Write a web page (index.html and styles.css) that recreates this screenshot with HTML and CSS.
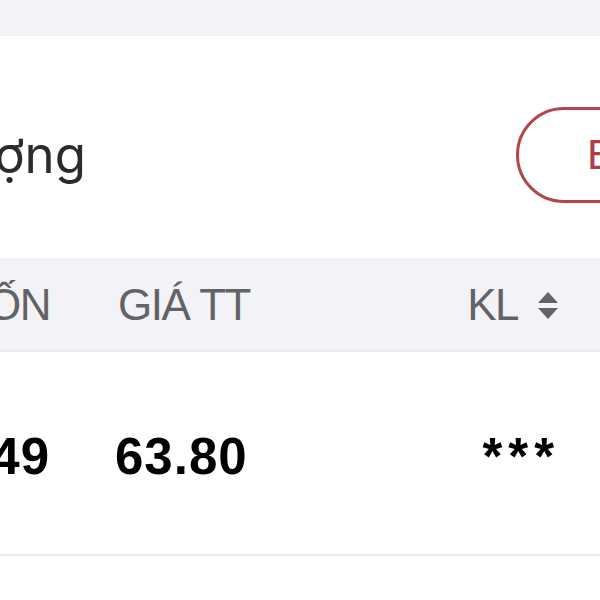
FILE: index.html
```html
<!DOCTYPE html>
<html lang="vi">
<head>
<meta charset="utf-8">
<link rel="stylesheet" href="styles.css">
</head>
<body>
<div class="page">
  <div class="topbar"></div>
  <div class="title-row">
    <div class="title"><span>Khối lượng</span></div>
    <div class="btn">Edit</div>
  </div>
  <div class="thead">
    <div class="c1"><span>GIÁ VỐN</span></div>
    <div class="c2">GIÁ TT</div>
    <div class="c3">KL
      <svg class="sort" width="20" height="27" viewBox="0 0 20 27"><path d="M10 0 L20 11 L0 11 Z" fill="#636366"/><path d="M0 16 L20 16 L10 27 Z" fill="#636366"/></svg>
    </div>
  </div>
  <div class="trow">
    <div class="c1"><span>12.49</span></div>
    <div class="c2">63.80</div>
    <div class="c3 stars">***</div>
  </div>
</div>
</body>
</html>
```
FILE: styles.css
```css
html, body { margin: 0; padding: 0; background: #fff; }
body { width: 600px; height: 600px; overflow: hidden; }
.page { width: 600px; overflow: hidden; }
.topbar { height: 35px; background: #f4f4f8; border-bottom: 1px solid #efeff2; }
.title-row {
  height: 222px; display: flex; align-items: center; justify-content: space-between;
  padding-top: 16px; box-sizing: border-box;
}
.title {
  width: 86px; display: flex; justify-content: flex-end; overflow: hidden;
  font-family: Inter, "Noto Sans", sans-serif; font-size: 51px; color: #2b2b2d;
  white-space: nowrap; line-height: 1.2;
}
.btn {
  flex-shrink: 0; width: 200px; height: 96px; box-sizing: border-box;
  border: 3px solid #b4464b; border-radius: 48px; margin-right: -116px;
  padding-left: 68px; display: flex; align-items: center;
  font-family: "Liberation Sans", Arial, sans-serif; font-size: 42px; color: #b03d45;
}
.thead {
  height: 94px; background: #f3f3f7; border-bottom: 2px solid #ececef;
  display: flex; align-items: center;
  font-family: "Liberation Sans", Arial, sans-serif; font-size: 44px; color: #636366;
  letter-spacing: -1.5px; padding-top: 2px; box-sizing: border-box;
}
.c1 { width: 50px; display: flex; justify-content: flex-end; overflow: hidden; white-space: nowrap; flex-shrink: 0; }
.c2 { margin-left: 68px; white-space: nowrap; }
.c3 { margin-left: auto; margin-right: 42px; display: flex; align-items: center; white-space: nowrap; }
.sort { margin-left: 20px; }
.trow {
  height: 204px; border-bottom: 2px solid #ececef; display: flex; align-items: flex-start;
  padding-top: 76px; box-sizing: border-box;
  font-family: "Liberation Sans", Arial, sans-serif; font-weight: bold; font-size: 51px; color: #000;
  line-height: 1.15; letter-spacing: 1px;
}
.trow .c2 { margin-left: 65px; }
.stars { margin-right: 40px; letter-spacing: 6px; }
```
